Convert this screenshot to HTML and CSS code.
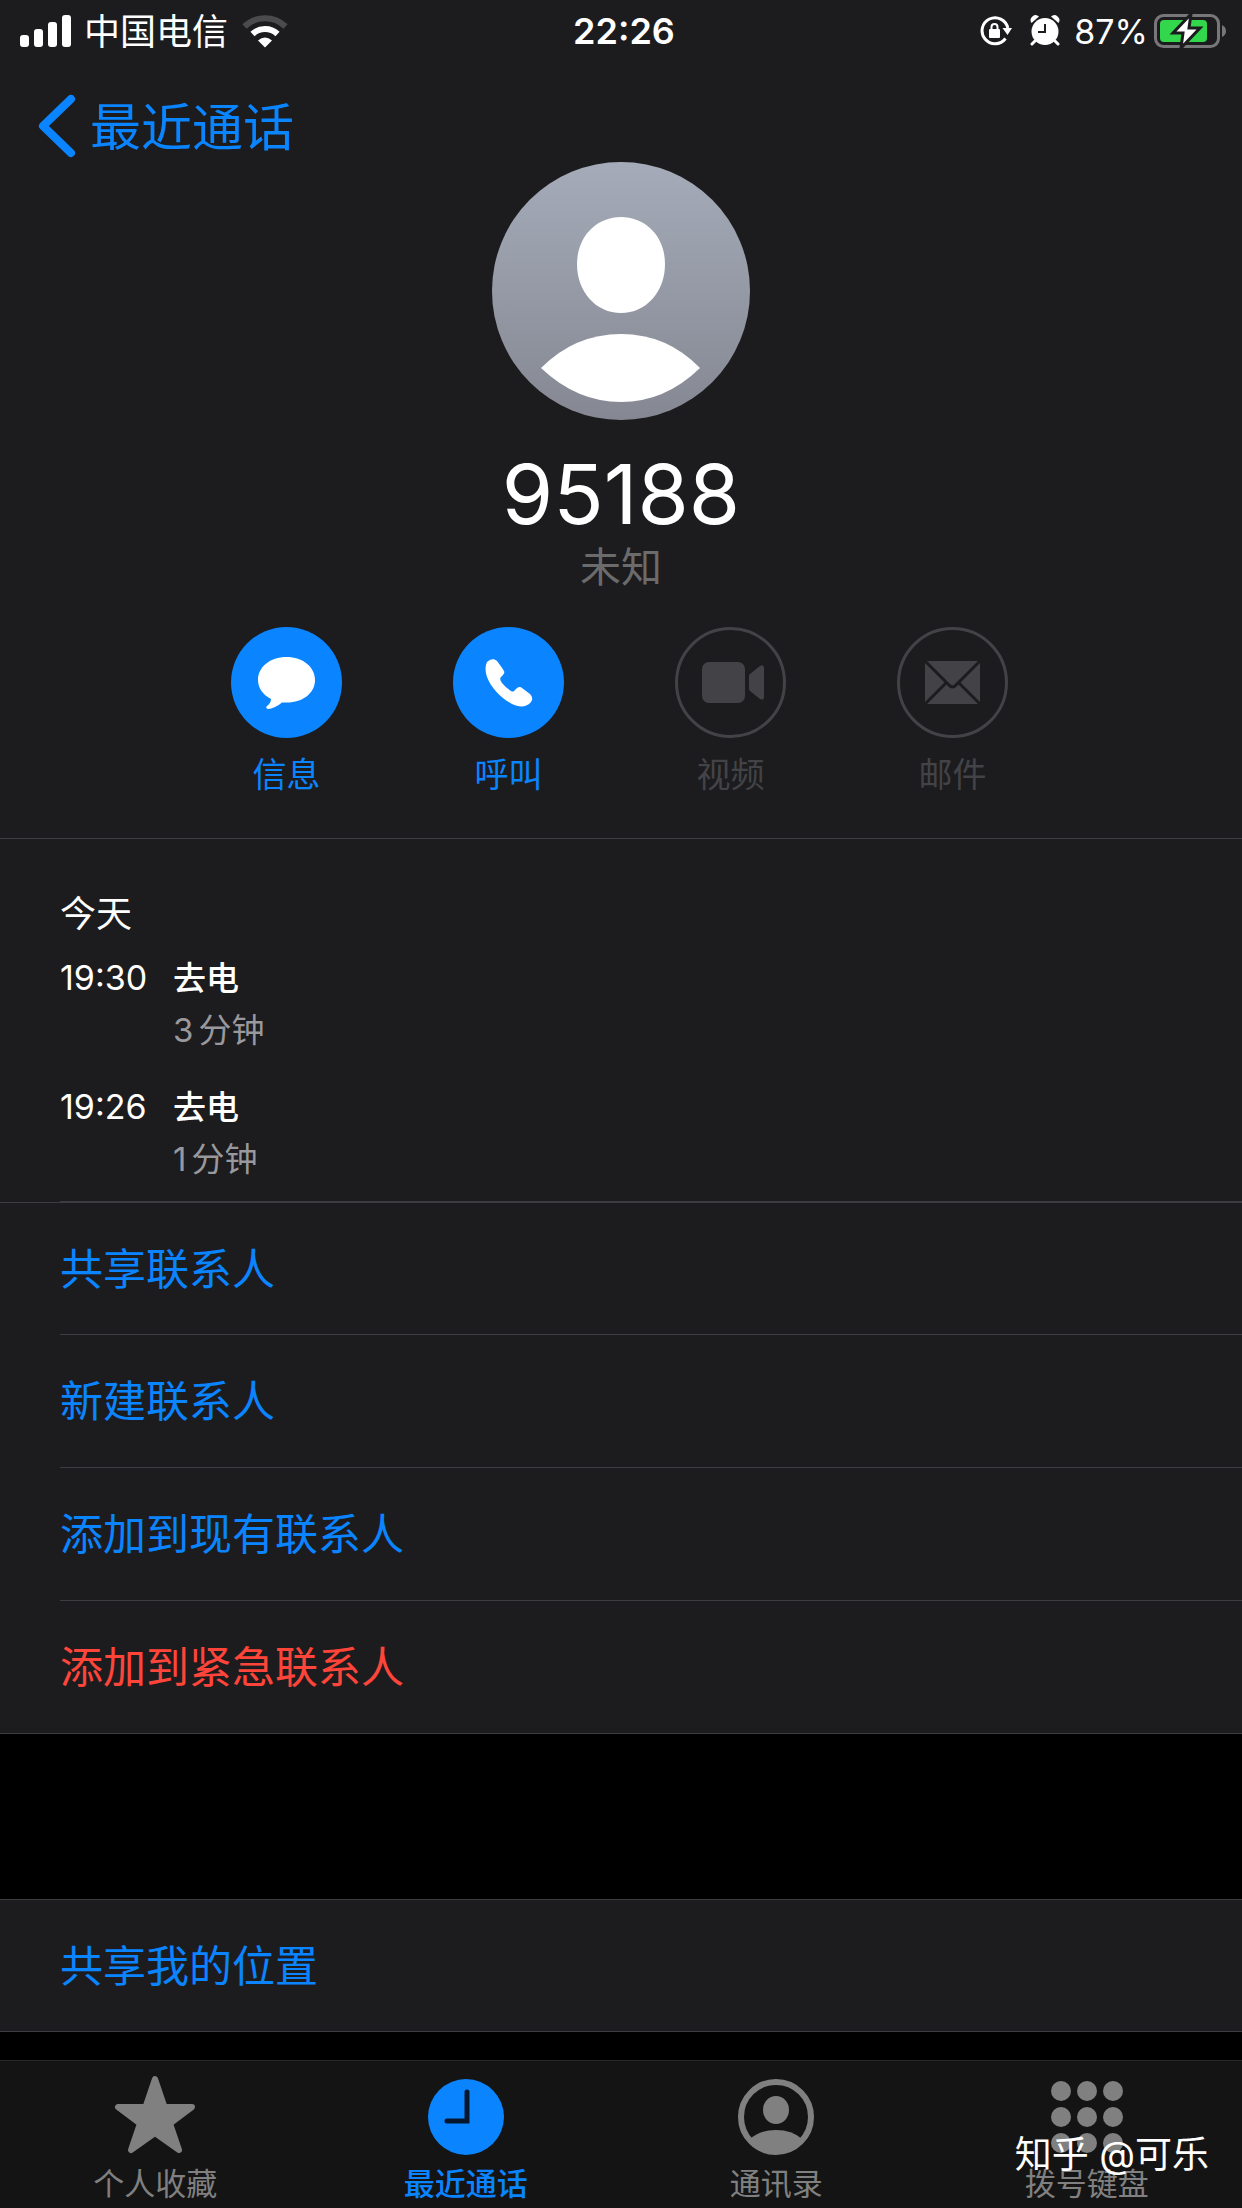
FILE: index.html
```html
<!DOCTYPE html>
<html lang="zh-CN">
<head>
    <meta charset="UTF-8">
    <meta name="viewport" content="width=device-width, initial-scale=1">
    <title>95188</title>
    <link rel="stylesheet" href="styles.css">
</head>
<body>
    <header class="status-bar">
        <div class="status-left">
            <svg class="signal" width="52" height="32" viewBox="0 0 52 32" fill="#fff">
                <rect x="0" y="20" width="9" height="12" rx="3"/>
                <rect x="14" y="14" width="9" height="18" rx="3"/>
                <rect x="28" y="7" width="9" height="25" rx="3"/>
                <rect x="42" y="0" width="9" height="32" rx="3"/>
            </svg>
            <span class="carrier">中国电信</span>
            <svg class="wifi" width="46" height="34" viewBox="0 0 46 34" fill="none">
                <path d="M2.500 12.500A29.500 29.500 0 0 1 43.500 12.500" stroke="#4b4b4d" stroke-width="6"/>
                <path d="M10.500 20A18 18 0 0 1 35.500 20" stroke="#fff" stroke-width="6"/>
                <path d="M23 33.500L16 26.500Q23 20.500 30 26.500Z" fill="#fff"/>
            </svg>
        </div>
        <span class="clock">22:26</span>
        <div class="status-right">
            <svg width="32" height="32" viewBox="0 0 32 32" fill="none">
                <path d="M25.500 23.500A13 13 0 1 1 27.800 13" stroke="#fff" stroke-width="3"/>
                <path d="M22.500 13H32L27.500 20Z" fill="#fff"/>
                <rect x="9" y="14" width="11" height="9" rx="1" fill="#fff"/>
                <path d="M11.500 14.500V12a3 3 0 0 1 6 0v2.500" stroke="#fff" stroke-width="2"/>
            </svg>
            <svg class="alarm" width="30" height="32" viewBox="0 0 30 32">
                <path d="M5 26L2 29M25 26L28 29" stroke="#fff" stroke-width="3" stroke-linecap="round"/>
                <path d="M1.500 8A5 5 0 0 1 9 1.500Z M21 1.500A5 5 0 0 1 28.500 8Z" fill="#fff"/>
                <circle cx="15" cy="16.500" r="13.500" fill="#fff"/>
                <path d="M15 9V17H8" stroke="#1c1c1e" stroke-width="2" fill="none"/>
            </svg>
            <span class="percent">87%</span>
            <svg class="battery" width="74" height="36" viewBox="0 0 74 36">
                <rect x="1.500" y="2.500" width="63" height="31" rx="8" fill="none" stroke="#77777a" stroke-width="3"/>
                <path d="M68 12Q72 14 72 18T68 24Z" fill="#77777a"/>
                <rect x="6" y="7" width="47" height="22" rx="4" fill="#32d74b"/>
                <path d="M37 1L19 20H29L27 35L46 15H35Z" fill="#fff" stroke="#1c1c1e" stroke-width="3"/>
            </svg>
        </div>
    </header>

    <nav class="nav-bar">
        <a class="back" href="#">
            <svg width="38" height="64" viewBox="0 0 38 64" fill="none" stroke="#0a84ff" stroke-width="8" stroke-linecap="round" stroke-linejoin="round">
                <path d="M33 5L5 32L33 59"/>
            </svg>
            <span class="back-label">最近通话</span>
        </a>
    </nav>

    <main>
        <section class="contact">
            <svg class="avatar" width="258" height="258" viewBox="0 0 258 258">
                <defs>
                    <linearGradient id="avatarFill" x1="0" y1="0" x2="0" y2="1">
                        <stop offset="0" stop-color="#a5abb9"/>
                        <stop offset="1" stop-color="#858892"/>
                    </linearGradient>
                </defs>
                <circle cx="129" cy="129" r="129" fill="url(#avatarFill)"/>
                <path d="M129 55C154 55 173 75 173 102C173 130 154 151 129 151C104 151 85 130 85 102C85 75 104 55 129 55Z" fill="#fff"/>
                <path d="M49 206Q83 172 129 172T208 206Q173 240 129 240T49 206Z" fill="#fff"/>
            </svg>
            <h1 class="number">95188</h1>
            <p class="location">未知</p>
            <div class="actions">
                <button class="action" type="button">
                    <svg width="111" height="111" viewBox="0 0 111 111">
                        <circle cx="55.500" cy="55.500" r="55.500" fill="#0a84ff"/>
                        <path d="M55.500 30C72 30 84 40 84 53C84 66 72 75.500 56 75.500Q53 75.500 51 75.500C47 79 41 82 37 82Q34 81 36 79Q40 76 40 72C32 68 27 61 27 53C27 40 39 30 55.500 30Z" fill="#fff"/>
                    </svg>
                    信息
                </button>
                <button class="action" type="button">
                    <svg width="111" height="111" viewBox="0 0 111 111">
                        <circle cx="55.500" cy="55.500" r="55.500" fill="#0a84ff"/>
                        <path d="M34 35C37 32 41 31 44 34C47 38 50 42 51 44Q52 46 50 48L48 50Q46 52 49 56Q53 61 58 64Q60 65 61 64L64 61Q67 59 69 61L77 67Q81 71 78 75C74 80 67 81 59 77C48 71 38 61 34 50Q31 41 34 35Z" fill="#fff"/>
                    </svg>
                    呼叫
                </button>
                <button class="action" type="button" disabled>
                    <svg width="111" height="111" viewBox="0 0 111 111">
                        <circle cx="55.500" cy="55.500" r="54" fill="none" stroke="#434347" stroke-width="3"/>
                        <rect x="27" y="35" width="43" height="41" rx="7" fill="#434347"/>
                        <path d="M74 49Q74 48 75 47L85 39Q89 37 89 41V70Q89 74 85 72L75 64Q74 63 74 62Z" fill="#434347"/>
                    </svg>
                    视频
                </button>
                <button class="action" type="button" disabled>
                    <svg width="111" height="111" viewBox="0 0 111 111">
                        <circle cx="55.500" cy="55.500" r="54" fill="none" stroke="#434347" stroke-width="3"/>
                        <rect x="28" y="34" width="55" height="43" rx="2" fill="#434347"/>
                        <path d="M28 34L52 58Q55.500 62 59 58L83 34M28 77L49 56M83 77L62 56" fill="none" stroke="#1c1c1e" stroke-width="3"/>
                    </svg>
                    邮件
                </button>
            </div>
        </section>

        <section class="calls">
            <h2 class="calls-day">今天</h2>
            <ul class="call-list">
                <li class="call">
                    <time class="call-time">19:30</time>
                    <div>
                        <p class="call-type">去电</p>
                        <p class="call-length"><span class="count">3</span>分钟</p>
                    </div>
                </li>
                <li class="call">
                    <time class="call-time">19:26</time>
                    <div>
                        <p class="call-type">去电</p>
                        <p class="call-length"><span class="count">1</span>分钟</p>
                    </div>
                </li>
            </ul>
        </section>

        <section class="options">
            <button class="option" type="button">共享联系人</button>
            <button class="option" type="button">新建联系人</button>
            <button class="option" type="button">添加到现有联系人</button>
            <button class="option danger" type="button">添加到紧急联系人</button>
        </section>

        <section class="options share">
            <button class="option" type="button">共享我的位置</button>
        </section>
    </main>

    <footer class="tab-bar">
        <a class="tab" href="#">
            <svg class="star" width="84" height="80" viewBox="0 2 84 80">
                <path d="M42 4L51.500 32H79L57 48.500L66 75L42 58L18 75L27 48.500L5 32H32.500Z" fill="#808080" stroke="#808080" stroke-width="6" stroke-linejoin="round"/>
            </svg>
            个人收藏
        </a>
        <a class="tab active" href="#">
            <svg width="80" height="80" viewBox="0 0 80 80">
                <circle cx="40" cy="40" r="38" fill="#0a84ff"/>
                <path d="M41 15V44H21" fill="none" stroke="#06162c" stroke-width="5" stroke-linecap="round"/>
            </svg>
            最近通话
        </a>
        <a class="tab" href="#">
            <svg width="80" height="80" viewBox="0 0 80 80" fill="#808080">
                <circle cx="40" cy="40" r="35" fill="none" stroke="#808080" stroke-width="6"/>
                <ellipse cx="40" cy="33" rx="13" ry="14"/>
                <path d="M14 62Q24 53 40 53T66 62Q55 76 40 76T14 62Z"/>
            </svg>
            通讯录
        </a>
        <a class="tab" href="#">
            <svg width="80" height="80" viewBox="0 0 80 80" fill="#808080">
                <circle cx="14" cy="14" r="10"/><circle cx="40" cy="14" r="10"/><circle cx="66" cy="14" r="10"/>
                <circle cx="14" cy="40" r="10"/><circle cx="40" cy="40" r="10"/><circle cx="66" cy="40" r="10"/>
                <circle cx="14" cy="66" r="10"/><circle cx="40" cy="66" r="10"/><circle cx="66" cy="66" r="10"/>
            </svg>
            拨号键盘
        </a>
        <span class="watermark">知乎 @可乐</span>
    </footer>
</body>
</html>
```

FILE: styles.css
```css
* {
    box-sizing: border-box;
}

body {
    margin: 0;
    min-height: 100vh;
    display: flex;
    flex-direction: column;
    background-color: #1c1c1e;
    color: #fff;
    font-family: Inter, "Noto Sans CJK SC", sans-serif;
}

h1, h2, p, ul {
    margin: 0;
    padding: 0;
    font-weight: 400;
}

svg {
    display: block;
    flex: none;
}

a {
    color: inherit;
    text-decoration: none;
}

button {
    border: none;
    background: none;
    padding: 0;
    font-family: inherit;
    color: #0a84ff;
}

.status-bar {
    display: grid;
    grid-template-columns: 1fr auto 1fr;
    align-items: center;
    height: 62px;
    padding: 0 14px 0 20px;
    font-size: 36px;
}

.status-left,
.status-right {
    display: flex;
    align-items: center;
}

.status-right {
    justify-content: flex-end;
}

.carrier {
    margin: 0 14px 0 12px;
    padding-bottom: 4px;
}

.clock {
    font-weight: 600;
}

.alarm {
    margin-left: 18px;
}

.percent {
    margin: 0 6px 0 14px;
    font-size: 34px;
}

.nav-bar {
    height: 100px;
    padding: 28px 38px 0;
}

.back {
    display: inline-flex;
    align-items: center;
    gap: 14px;
    height: 72px;
    color: #0a84ff;
    font-size: 51px;
}

.back-label {
    padding-bottom: 4px;
}

main {
    flex: 1;
    background-color: #000;
}

.contact {
    display: flex;
    flex-direction: column;
    align-items: center;
    padding-bottom: 39px;
    background-color: #1c1c1e;
}

.number {
    margin-top: 25px;
    font-size: 83px;
    line-height: 98px;
}

.location {
    color: #6b6b6b;
    font-size: 41px;
    line-height: 48px;
}

.actions {
    display: flex;
    gap: 111px;
    margin-top: 36px;
    padding-right: 3px;
}

.action {
    display: flex;
    flex-direction: column;
    align-items: center;
    gap: 13px;
    font-size: 34px;
    line-height: 48px;
}

.action:disabled {
    color: #434347;
}

.calls {
    position: relative;
    padding: 48px 60px 17px;
    border-top: 1px solid #3d3d41;
    background-color: #1c1c1e;
}

/* inset separator under the last call */
.calls::after {
    content: "";
    position: absolute;
    left: 60px;
    right: 0;
    bottom: 0;
    height: 1px;
    background-color: #3d3d41;
}

.calls-day {
    font-size: 36px;
    line-height: 54px;
}

.call-list {
    display: flex;
    flex-direction: column;
    gap: 25px;
    margin-top: 11px;
    list-style: none;
}

.call {
    display: grid;
    grid-template-columns: 113px 1fr;
    font-size: 33px;
    line-height: 52px;
}

.call-time {
    font-size: 34px;
}

.call-type {
    font-weight: 500;
}

.call-length {
    color: #98989d;
}

.count {
    margin-right: 5px;
}

.options {
    border-top: 1px solid #3d3d41;
    border-bottom: 1px solid #3d3d41;
    padding-left: 60px;
    background-color: #1c1c1e;
}

.option {
    display: block;
    width: 100%;
    height: 131px;
    padding-bottom: 6px;
    font-size: 43px;
    text-align: left;
}

.option + .option {
    height: 133px;
    border-top: 1px solid #3d3d41;
}

.danger {
    color: #ff453a;
}

.share {
    margin: 165px 0 28px;
}

.tab-bar {
    position: relative;
    display: grid;
    grid-template-columns: repeat(4, 1fr);
    height: 148px;
    border-top: 1px solid #29292a;
    background-color: #141415;
}

.tab {
    display: flex;
    flex-direction: column;
    align-items: center;
    padding-top: 16px;
    color: #808080;
    font-size: 31px;
    line-height: 54px;
}

.star {
    overflow: visible;
}

.active {
    color: #0a84ff;
    font-weight: 500;
}

.watermark {
    position: absolute;
    right: 33px;
    bottom: 28px;
    font-size: 37px;
    line-height: 50px;
}
```
